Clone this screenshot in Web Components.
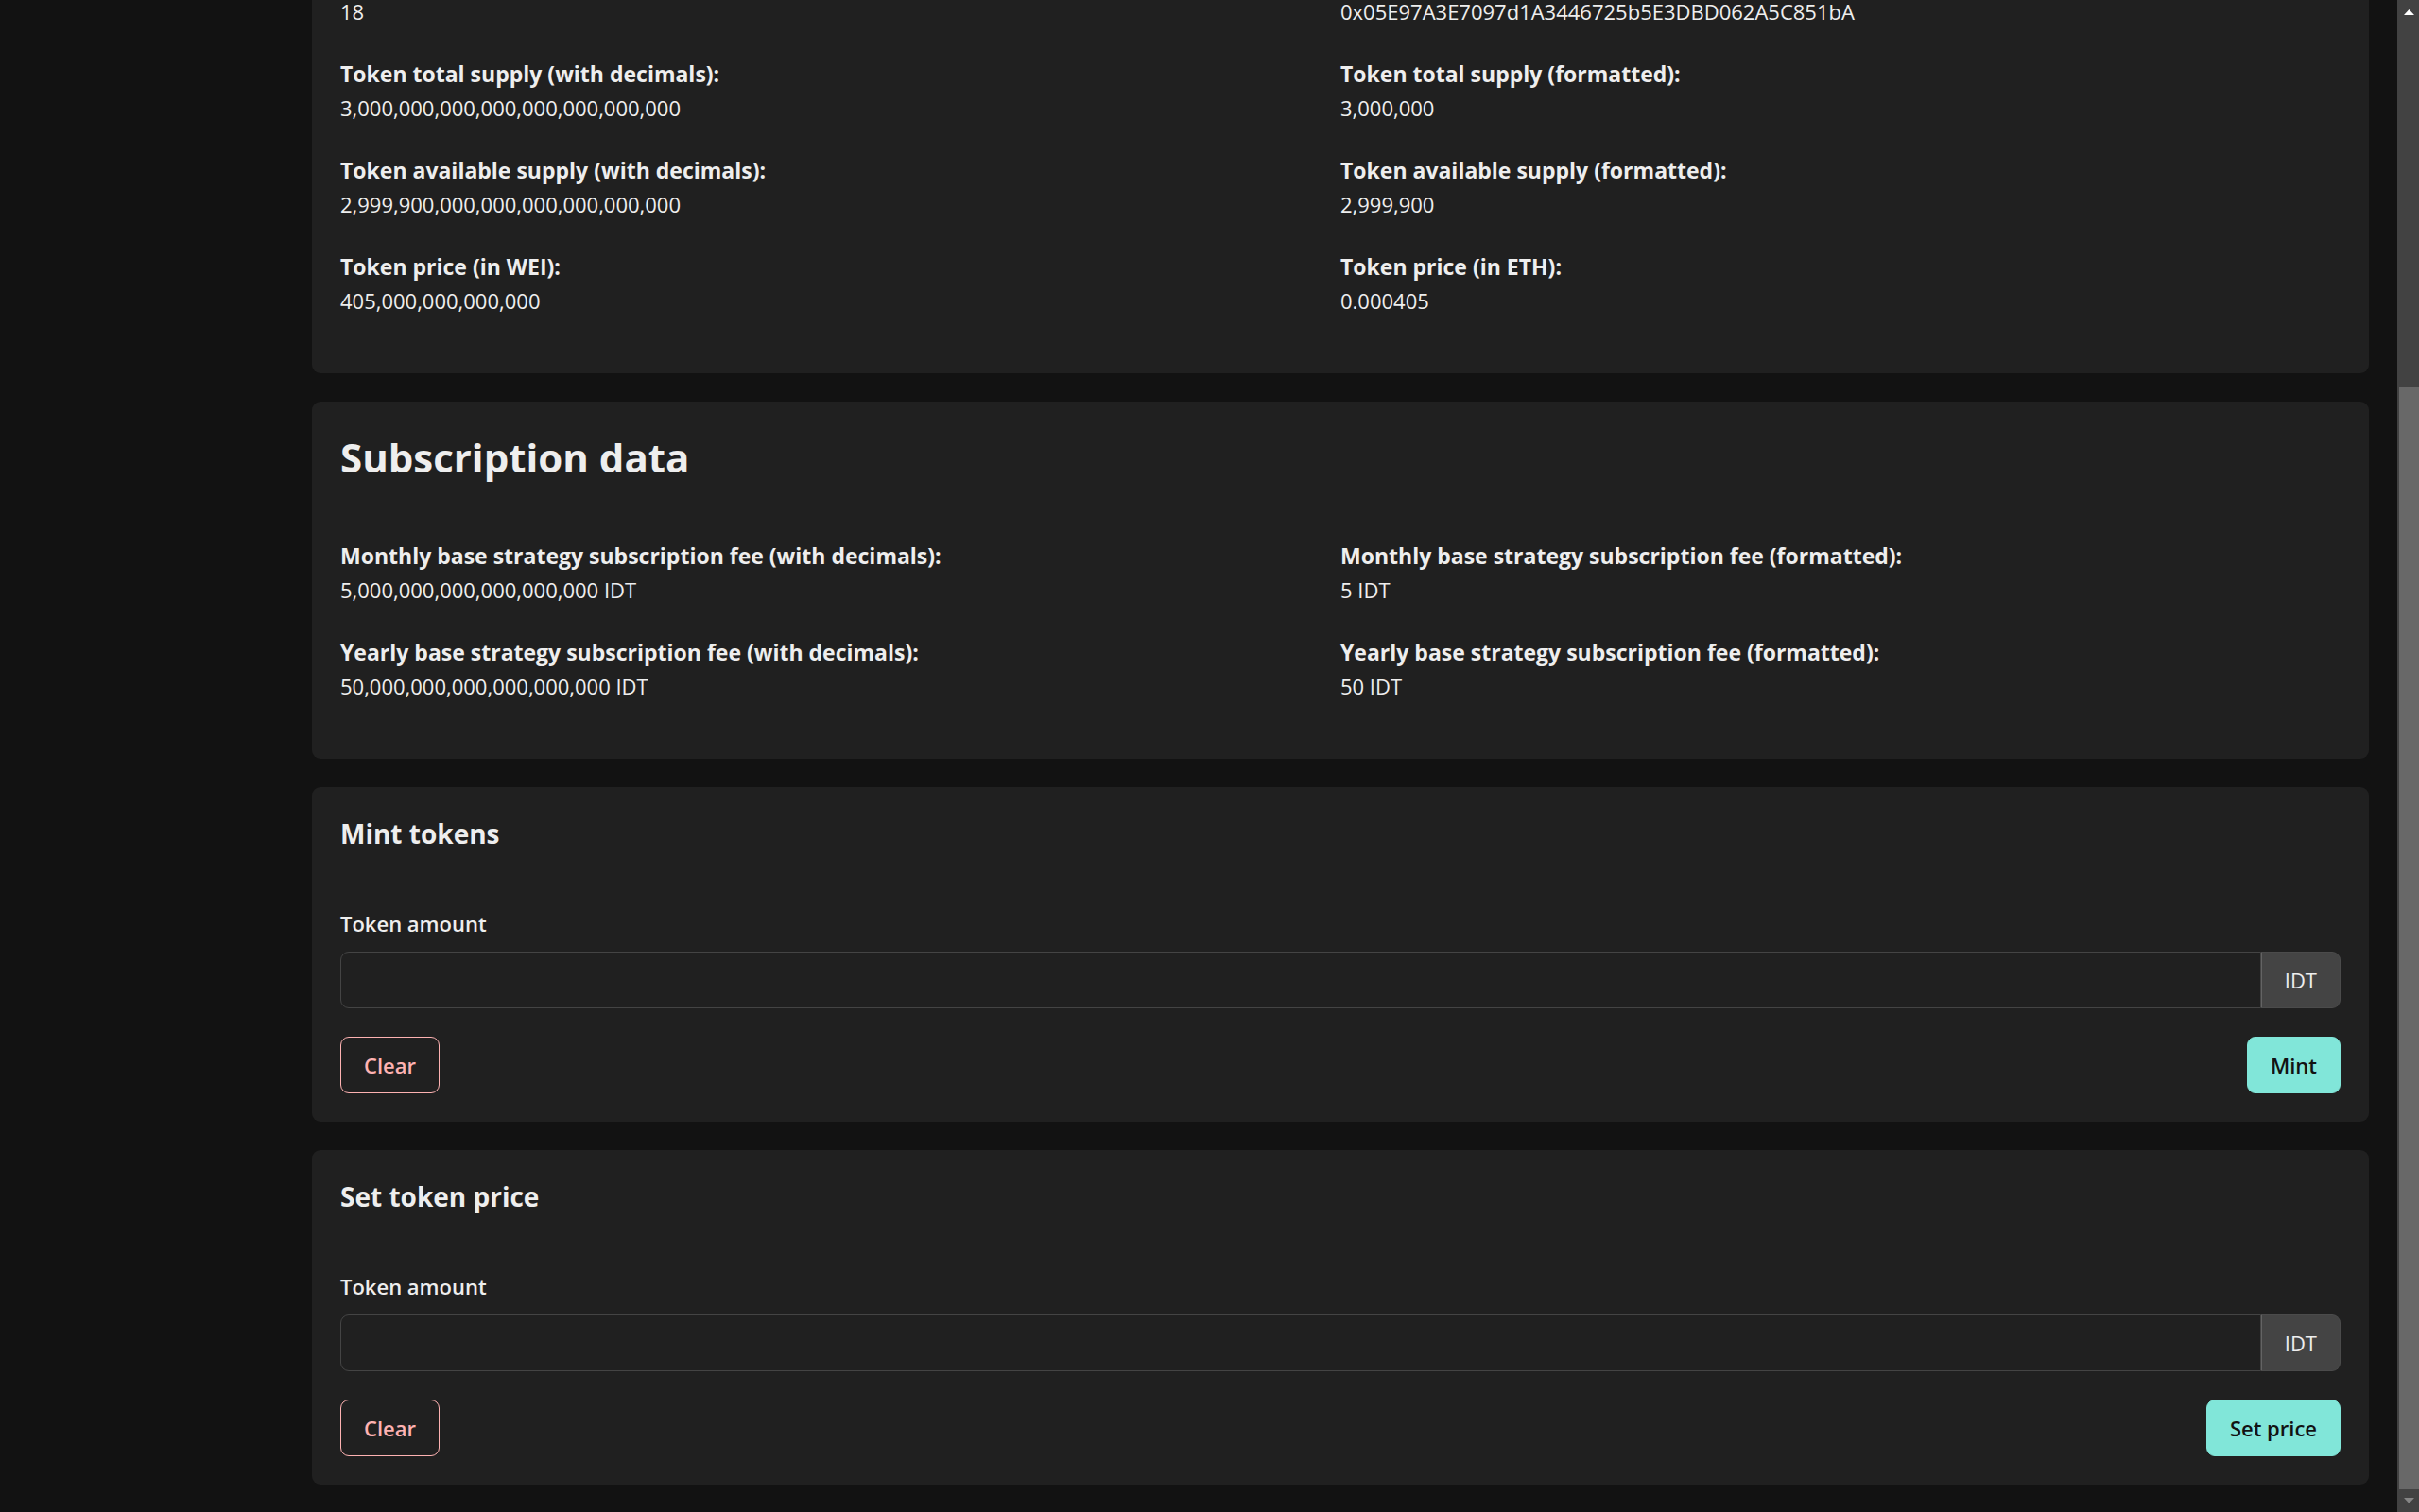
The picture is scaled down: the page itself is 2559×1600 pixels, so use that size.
<!DOCTYPE html>
<html lang="en">
<head>
<meta charset="utf-8">
<title>Token administration</title>
<style>
  body { margin: 0; background: #121212; color: #eee; font: 22px/36px "Open Sans", "Noto Sans", sans-serif; }
</style>
</head>
<body>
<admin-shell>
  <panel-card continued>
    <data-item value="18"></data-item>
    <data-item value="0x05E97A3E7097d1A3446725b5E3DBD062A5C851bA"></data-item>
    <data-item label="Token total supply (with decimals):" value="3,000,000,000,000,000,000,000,000"></data-item>
    <data-item label="Token total supply (formatted):" value="3,000,000"></data-item>
    <data-item label="Token available supply (with decimals):" value="2,999,900,000,000,000,000,000,000"></data-item>
    <data-item label="Token available supply (formatted):" value="2,999,900"></data-item>
    <data-item label="Token price (in WEI):" value="405,000,000,000,000"></data-item>
    <data-item label="Token price (in ETH):" value="0.000405"></data-item>
  </panel-card>
  <panel-card>
    <h1 slot="title">Subscription data</h1>
    <data-item label="Monthly base strategy subscription fee (with decimals):" value="5,000,000,000,000,000,000 IDT"></data-item>
    <data-item label="Monthly base strategy subscription fee (formatted):" value="5 IDT"></data-item>
    <data-item label="Yearly base strategy subscription fee (with decimals):" value="50,000,000,000,000,000,000 IDT"></data-item>
    <data-item label="Yearly base strategy subscription fee (formatted):" value="50 IDT"></data-item>
  </panel-card>
  <amount-form heading="Mint tokens" action="Mint"></amount-form>
  <amount-form heading="Set token price" action="Set price"></amount-form>
</admin-shell>

<script>
  class BaseElement extends HTMLElement {
    connectedCallback() {
      if (this.shadowRoot) return;
      this.attachShadow({ mode: 'open' }).innerHTML = this.render();
    }
  }

  customElements.define('admin-shell', class extends BaseElement {
    render() {
      return `<style>
        :host { display: flex; height: 100vh; overflow: hidden; }
        main { flex: 1; display: flex; flex-direction: column; justify-content: flex-end; gap: 30px; padding: 0 30px 29px 330px; }
      </style>
      <main><slot></slot></main>
      <scroll-rail></scroll-rail>`;
    }
  });

  customElements.define('scroll-rail', class extends BaseElement {
    render() {
      return `<style>
        :host { display: flex; flex-direction: column; width: 23px; background: #424242; }
        svg { display: block; width: 23px; height: 24px; }
        .before { flex: 386; }
        .thumb { flex: 1166; margin-left: 2px; background: #686868; }
      </style>
      <svg viewBox="0 0 23 24"><path d="M12.5 10 18 16H7z" fill="#fff"/></svg>
      <div class="before"></div>
      <div class="thumb"></div>
      <svg viewBox="0 0 23 24"><path d="M7 9h11l-5.500 6z" fill="#868686"/></svg>`;
    }
  });

  customElements.define('panel-card', class extends BaseElement {
    render() {
      return `<style>
        :host { display: block; flex: none; background: #202020; border-radius: 9px; padding: 30px; }
        :host([continued]) { padding-top: 0; border-radius: 0 0 9px 9px; }
        ::slotted(h1) { margin: 0 0 56px; font-size: 42px; line-height: 58px; font-weight: 700; }
        .grid { display: grid; grid-template-columns: 1fr 1fr; }
      </style>
      <slot name="title"></slot>
      <div class="grid"><slot></slot></div>`;
    }
  });

  customElements.define('data-item', class extends BaseElement {
    render() {
      const label = this.getAttribute('label');
      return `<style>
        :host { display: block; padding-bottom: 30px; }
        p { margin: 0; line-height: 34px; }
        .label { font-size: 23px; line-height: 38px; font-weight: 700; }
      </style>
      ${label ? `<p class="label">${label}</p>` : ''}
      <p>${this.getAttribute('value')}</p>`;
    }
  });

  customElements.define('amount-form', class extends BaseElement {
    render() {
      return `<style>
        :host { display: block; flex: none; }
        form { grid-column: 1 / -1; }
        h2 { margin: 0 0 58px; font-size: 28px; line-height: 38px; font-weight: 700; }
        label { display: block; margin-bottom: 12px; font-weight: 600; }
        .group { display: flex; height: 60px; margin-bottom: 30px; }
        input { flex: 1; min-width: 0; box-sizing: border-box; margin: 0; padding: 0 24px; font: inherit; color: inherit;
          background: transparent; border: 1px solid #444; border-radius: 9px 0 0 9px; outline: 0; }
        .unit { display: flex; align-items: center; box-sizing: border-box; padding: 0 24px;
          background: #444; border: 1px solid #4b4b4b; border-left-color: #636363; border-radius: 0 9px 9px 0; }
        .actions { display: flex; justify-content: space-between; }
        button { height: 60px; padding: 0 24px; font: inherit; font-weight: 600; border: 1px solid #81e6d9; border-radius: 9px;
          background: #81e6d9; color: #121212; }
        .clear { background: transparent; border-color: #feb2b2; color: #feb2b2; }
      </style>
      <panel-card>
        <form>
          <h2>${this.getAttribute('heading')}</h2>
          <label for="amount">Token amount</label>
          <div class="group"><input id="amount" type="text"><span class="unit">IDT</span></div>
          <div class="actions"><button type="button" class="clear">Clear</button><button type="button">${this.getAttribute('action')}</button></div>
        </form>
      </panel-card>`;
    }
  });
</script>
</body>
</html>
